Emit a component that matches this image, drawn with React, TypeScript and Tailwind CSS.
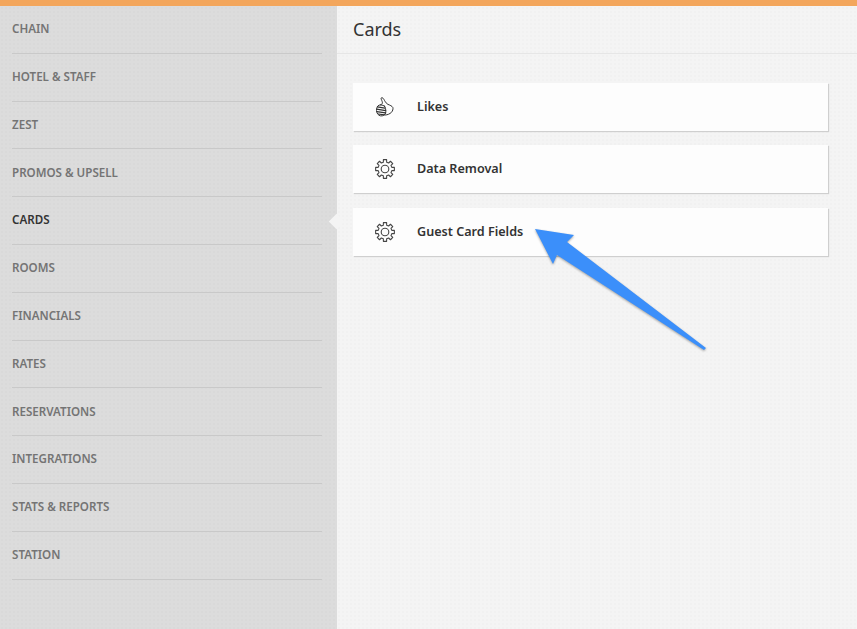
const NAV = [
  'CHAIN',
  'HOTEL & STAFF',
  'ZEST',
  'PROMOS & UPSELL',
  'CARDS',
  'ROOMS',
  'FINANCIALS',
  'RATES',
  'RESERVATIONS',
  'INTEGRATIONS',
  'STATS & REPORTS',
  'STATION',
]

// eight square-ish teeth around a ring, tooth pointing straight up first
const gearPath = (() => {
  const cx = 10
  const cy = 10
  const pt = (r: number, a: number) =>
    `${(cx + r * Math.sin(a)).toFixed(2)} ${(cy - r * Math.cos(a)).toFixed(2)}`
  let d = ''
  for (let i = 0; i < 8; i++) {
    const a = (i * Math.PI) / 4
    d += `${i === 0 ? 'M' : 'L'}${pt(7, a - 0.24)} L${pt(9.5, a - 0.17)} L${pt(9.5, a + 0.17)} L${pt(7, a + 0.24)} `
  }
  return d + 'Z'
})()

function GearIcon() {
  return (
    <svg width="20" height="20" viewBox="0 0 20 20" fill="none" stroke="#454545" strokeWidth="1.1" strokeLinejoin="round">
      <path d={gearPath} />
      <circle cx="10" cy="10" r="3.8" />
    </svg>
  )
}

function ThumbIcon() {
  return (
    <svg width="18" height="20" viewBox="0 0 18 20" fill="none" stroke="#333333" strokeWidth="1" strokeLinejoin="round" strokeLinecap="round">
      <path d="M4.5 7.8 C6.2 7.4 6.8 6.4 6.2 4.6 C5.6 2.8 4.6 1.4 5.4 .8 C6.4 .2 7.6 1.6 8.6 3.6 C9.6 5.4 10.6 6.6 12 7.4 C14 8.2 16 9 16.8 10.4 C17.4 12 16.6 14 15.4 15.4 C13.8 16.8 11.6 18 9.4 18" />
      <path d="M8.6 9.2 C6.4 7.6 3.2 7.4 1.8 9 C.6 10.6 .2 13 .8 15.2 C1.6 18 4 19.4 6.4 18.8 C8.6 18.2 9.8 16.6 9.8 14.6 C9.8 12.4 9.6 10.4 8.6 9.2 Z" />
      <path d="M1.4 9.8 L8.8 11.2 M.6 12.2 L9.6 13.6 M.8 14.6 L9.6 15.8 M2.2 17 L8.6 17.8" strokeWidth="1.2" />
    </svg>
  )
}

const CARDS = [
  { label: 'Likes', icon: <ThumbIcon />, gap: '' },
  { label: 'Data Removal', icon: <GearIcon />, gap: 'mt-[14px]' },
  { label: 'Guest Card Fields', icon: <GearIcon />, gap: 'mt-[15px]' },
]

export default function App() {
  return (
    <div className="relative flex h-[629px] w-[857px] flex-col overflow-hidden font-['Noto_Sans','Open_Sans',sans-serif]">
      <div className="h-[6px] shrink-0 bg-[#f3a65c]" />

      <div className="flex flex-1">
        {/* Sidebar */}
        <aside className="relative w-[337px] shrink-0 bg-[#dcdcdc] bg-[radial-gradient(#d9d9d9_1px,transparent_1px)] bg-[length:4px_4px] pl-3 pr-[15px]">
          {NAV.map((label) => (
            <div
              key={label}
              className={`flex h-[47.8px] items-center border-b border-[#c9c9c9] pb-[1px] text-[11.6px] font-semibold ${
                label === 'CARDS' ? 'text-[#333333]' : 'text-[#747474]'
              }`}
            >
              {label}
            </div>
          ))}
          {/* Active pointer */}
          <div className="absolute right-[-5px] top-[210px] h-[11px] w-[11px] rotate-45 bg-[#f4f4f4]" />
        </aside>

        {/* Main */}
        <main className="flex-1 bg-[#f4f4f4] bg-[radial-gradient(#f1f1f1_1px,transparent_1px)] bg-[length:4px_4px]">
          <header className="flex h-[48px] items-center border-b border-[#e6e6e6] pl-4 text-[18px] text-[#333333]">
            Cards
          </header>
          <div className="flex flex-col pl-4 pr-[29px] pt-[29px]">
            {CARDS.map((card) => (
              <div
                key={card.label}
                className={`flex h-[48px] items-center bg-[#fdfdfd] shadow-[1px_1px_1px_#cfcfcf] ${card.gap}`}
              >
                <div className="flex w-[64px] justify-center">{card.icon}</div>
                <span className="text-[12.6px] font-semibold text-[#333333]">{card.label}</span>
              </div>
            ))}
          </div>
        </main>
      </div>

      {/* Annotation arrow */}
      <svg className="absolute left-0 top-0" width="857" height="629" viewBox="0 0 857 629">
        <polygon
          points="535,229 574,235 567,242 706,348 704,350 557,255 553,264"
          fill="#3b8ffa"
          className="drop-shadow-[0_1px_1px_rgba(0,0,0,0.35)]"
        />
      </svg>
    </div>
  )
}
